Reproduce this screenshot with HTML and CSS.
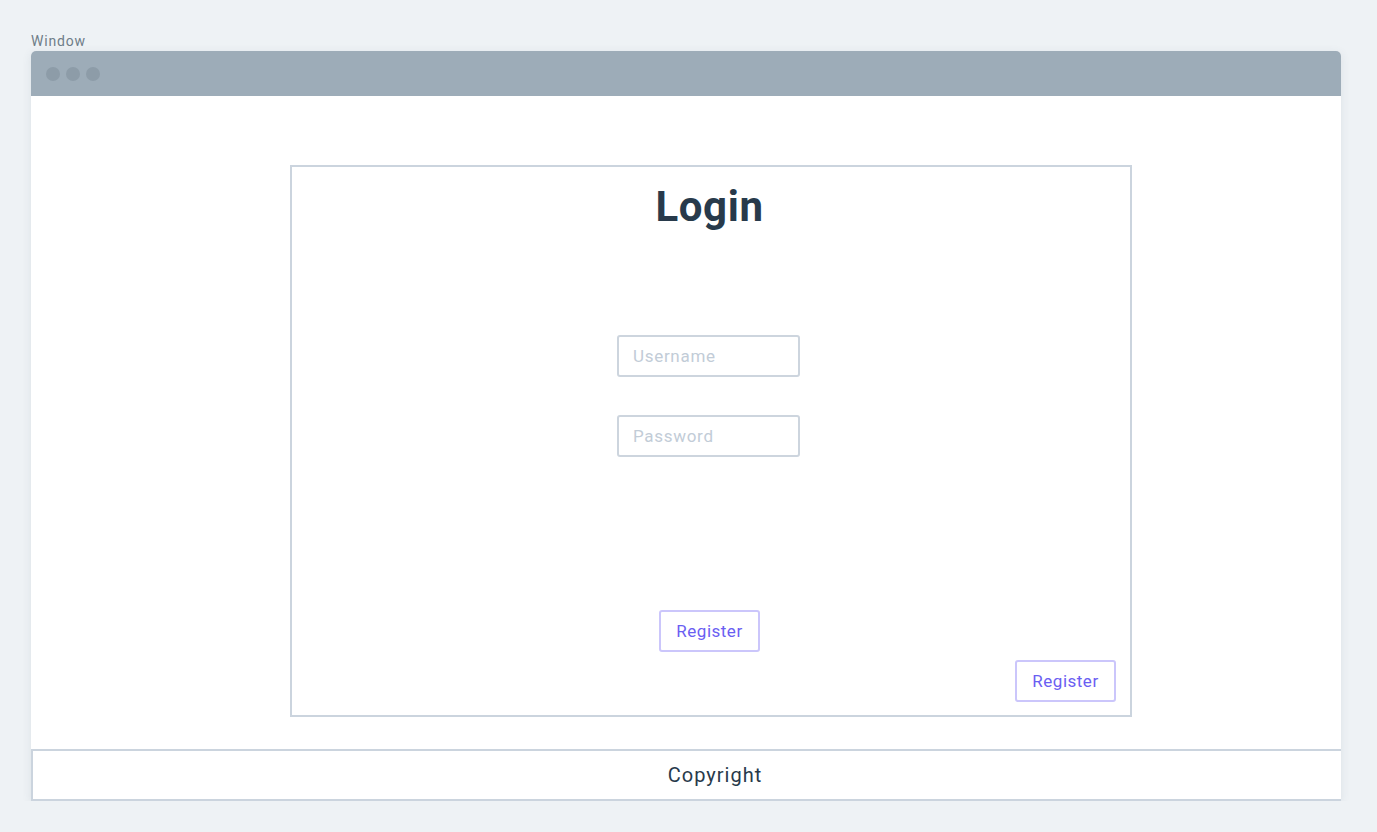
FILE: index.html
```html
<!DOCTYPE html>
<html>
<head>
<meta charset="utf-8">
<link rel="stylesheet" href="styles.css">
</head>
<body>
<div class="page">
  <div class="window-label">Window</div>
  <div class="window">
    <div class="titlebar">
      <span class="dot"></span><span class="dot"></span><span class="dot"></span>
    </div>
    <div class="window-body">
      <div class="card">
        <h1 class="title">Login</h1>
        <div class="field field-first">Username</div>
        <div class="field field-second">Password</div>
        <button class="btn btn-center">Register</button>
        <button class="btn btn-corner">Register</button>
      </div>
      <div class="footer">Copyright</div>
    </div>
  </div>
</div>
</body>
</html>
```
FILE: styles.css
```css
html, body {
  margin: 0;
  padding: 0;
  background: #eef2f5;
  font-family: Roboto, "Noto Sans", "Liberation Sans", sans-serif;
}
.page {
  padding: 32px 36px 0 31px;
}
.window-label {
  font-size: 14px;
  font-weight: 400;
  letter-spacing: 0.8px;
  line-height: 19px;
  color: #6f7d88;
  height: 19px;
}
.window {
  width: 1310px;
  background: #ffffff;
  border-radius: 5px 5px 0 0;
  box-shadow: 0 2px 10px rgba(60, 80, 100, 0.10);
  overflow: hidden;
}
.titlebar {
  height: 45px;
  background: #9dacb8;
  display: flex;
  align-items: center;
  gap: 6px;
  padding-left: 15px;
  box-sizing: border-box;
}
.dot {
  width: 14px;
  height: 14px;
  border-radius: 50%;
  background: #8d9ca8;
}
.window-body {
  padding-top: 69px;
  display: flex;
  flex-direction: column;
}
.card {
  margin-left: 259px;
  width: 842px;
  height: 552px;
  box-sizing: border-box;
  border: 2px solid #cbd4de;
  display: flex;
  flex-direction: column;
  align-items: center;
}
.title {
  margin: 16px 0 0 -3px;
  font-size: 42px;
  line-height: 48px;
  font-weight: 700;
  letter-spacing: 0.6px;
  color: #283a4b;
}
.field {
  width: 183px;
  height: 42px;
  box-sizing: border-box;
  border: 2px solid #cdd5de;
  border-radius: 3px;
  color: #c2ccd7;
  font-size: 17px;
  font-weight: 400;
  letter-spacing: 0.7px;
  line-height: 38px;
  padding-left: 14px;
  margin-left: -5px;
}
.field-first {
  margin-top: 104px;
}
.field-second {
  margin-top: 38px;
}
.btn {
  width: 101px;
  height: 42px;
  box-sizing: border-box;
  border: 2px solid #cbc6fb;
  border-radius: 3px;
  background: #ffffff;
  color: #6a5ef2;
  font-family: Roboto, "Noto Sans", "Liberation Sans", sans-serif;
  font-size: 17px;
  font-weight: 400;
  letter-spacing: 0.5px;
  padding: 0;
}
.btn-center {
  margin-top: 153px;
  margin-left: -3px;
}
.btn-corner {
  margin-top: 8px;
  align-self: flex-end;
  margin-right: 14px;
}
.footer {
  margin-top: 32px;
  width: 1368px;
  flex-shrink: 0;
  height: 52px;
  box-sizing: border-box;
  border: 2px solid #cbd4de;
  text-align: center;
  font-size: 20px;
  font-weight: 400;
  letter-spacing: 1px;
  line-height: 48px;
  color: #283a4b;
}
```
